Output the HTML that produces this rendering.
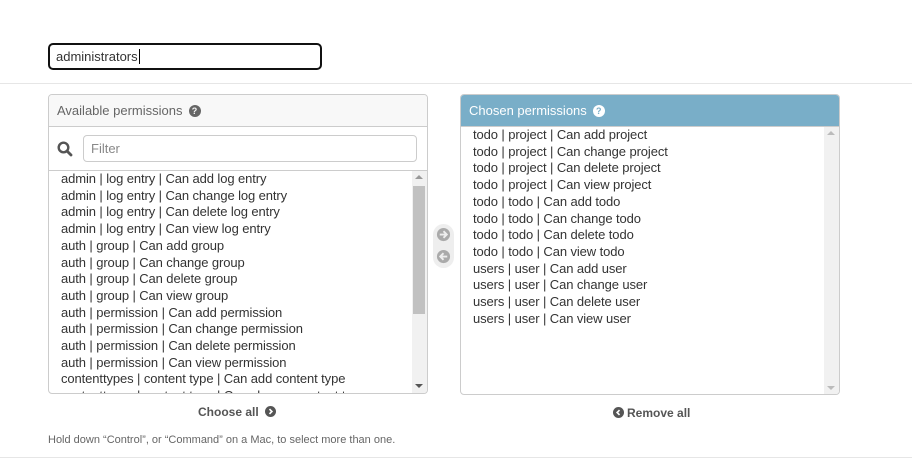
<!DOCTYPE html>
<html><head><style>
*{box-sizing:border-box;margin:0;padding:0}
body{width:912px;height:461px;background:#fff;font-family:"Liberation Sans",sans-serif;color:#333;position:relative;overflow:hidden}
.abs{position:absolute}
.inp{left:48px;top:43px;width:274px;height:27px;border:2px solid #111;border-radius:5px;font-size:13px;padding:4px 6px;color:#333}
.hr{left:0;width:912px;height:1px;background:#e6e6e6}
.box{border:1px solid #ccc;border-radius:4px;overflow:hidden}
.hd{height:32px;font-size:13px;padding:8px 8px;border-bottom:1px solid #ccc}
.q{display:inline-block;width:12px;height:12px;border-radius:50%;font-size:9px;font-weight:bold;text-align:center;line-height:12px;margin-left:6px;vertical-align:1px}
.list{font-size:13px;line-height:16.7px;padding-left:12px;color:#333;letter-spacing:-0.1px}
.sb{position:absolute;right:0;width:15px;background:#f1f1f1}
</style></head><body>
<div class="abs inp">administrators<span style="border-left:1px solid #000;margin-left:1px"></span></div>
<div class="abs hr" style="top:83px"></div>
<div class="abs box" style="left:48px;top:94px;width:380px;height:300px">
 <div class="hd" style="background:#f8f8f8;color:#666">Available permissions<span class="q" style="background:#666;color:#f8f8f8">?</span></div>
 <div style="height:44px;border-bottom:1px solid #ccc;position:relative">
  <svg class="abs" style="left:8px;top:14px" width="16" height="16" viewBox="0 0 16 16"><circle cx="6.5" cy="6.5" r="4.8" fill="none" stroke="#555" stroke-width="2.4"/><path d="M10 10l4 4" stroke="#555" stroke-width="2.8" stroke-linecap="round"/></svg>
  <div class="abs" style="left:34px;top:8px;width:334px;height:27px;border:1px solid #ccc;border-radius:4px;font-size:13px;color:#888;padding:5px 7px">Filter</div>
 </div>
 <div class="list" style="position:relative;height:222px;overflow:hidden">
 admin | log entry | Can add log entry<br>admin | log entry | Can change log entry<br>admin | log entry | Can delete log entry<br>admin | log entry | Can view log entry<br>auth | group | Can add group<br>auth | group | Can change group<br>auth | group | Can delete group<br>auth | group | Can view group<br>auth | permission | Can add permission<br>auth | permission | Can change permission<br>auth | permission | Can delete permission<br>auth | permission | Can view permission<br>contenttypes | content type | Can add content type<br>contenttypes | content type | Can change content type
 <div class="sb" style="top:0;height:222px"><div style="position:absolute;left:3px;top:4px;border:4px solid transparent;border-bottom:4px solid #999;border-top:0"></div><div style="position:absolute;left:1px;top:15px;width:12px;height:128px;background:#c1c1c1"></div><div style="position:absolute;left:3px;bottom:5px;border:4px solid transparent;border-top:4px solid #555;border-bottom:0"></div></div>
 </div>
</div>
<div class="abs" style="left:433px;top:224px;width:21px;height:44px;background:#eee;border-radius:11px">
 <svg class="abs" style="left:3px;top:3px" width="15" height="15" viewBox="0 0 16 16"><circle cx="8" cy="8" r="7" fill="#aaa"/><path d="M4 8h7M8 4.5l3.5 3.5L8 11.5" stroke="#eee" stroke-width="2" fill="none"/></svg>
 <svg class="abs" style="left:3px;top:25px" width="15" height="15" viewBox="0 0 16 16"><circle cx="8" cy="8" r="7" fill="#aaa"/><path d="M12 8H5M8 4.5L4.5 8 8 11.5" stroke="#eee" stroke-width="2" fill="none"/></svg>
</div>
<div class="abs box" style="left:460px;top:94px;width:380px;height:301px">
 <div class="hd" style="background:#79aec8;color:#fff;border-bottom-color:#ccc">Chosen permissions<span class="q" style="background:#fff;color:#79aec8">?</span></div>
 <div class="list" style="position:relative;height:268px">
 todo | project | Can add project<br>todo | project | Can change project<br>todo | project | Can delete project<br>todo | project | Can view project<br>todo | todo | Can add todo<br>todo | todo | Can change todo<br>todo | todo | Can delete todo<br>todo | todo | Can view todo<br>users | user | Can add user<br>users | user | Can change user<br>users | user | Can delete user<br>users | user | Can view user
 <div class="sb" style="top:0;height:268px"><div style="position:absolute;left:3px;top:4px;border:4px solid transparent;border-bottom:4px solid #bbb;border-top:0"></div><div style="position:absolute;left:3px;bottom:5px;border:4px solid transparent;border-top:4px solid #bbb;border-bottom:0"></div></div>
 </div>
</div>
<div class="abs" style="left:198px;top:405px;font-size:12px;font-weight:bold;color:#555">Choose all <svg width="11" height="11" viewBox="0 0 16 16" style="vertical-align:-1px;margin-left:3px"><circle cx="8" cy="8" r="8" fill="#555"/><path d="M6.5 4.5L10 8l-3.5 3.5" stroke="#fff" stroke-width="2.4" fill="none"/></svg></div>
<div class="abs" style="left:613px;top:406px;font-size:12px;font-weight:bold;color:#555"><svg width="11" height="11" viewBox="0 0 16 16" style="vertical-align:-1px;margin-right:3px"><circle cx="8" cy="8" r="8" fill="#555"/><path d="M9.5 4.5L6 8l3.5 3.5" stroke="#fff" stroke-width="2.4" fill="none"/></svg>Remove all</div>
<div class="abs" style="left:48px;top:434px;font-size:11px;color:#666">Hold down “Control”, or “Command” on a Mac, to select more than one.</div>
<div class="abs hr" style="top:457px"></div>
</body></html>
